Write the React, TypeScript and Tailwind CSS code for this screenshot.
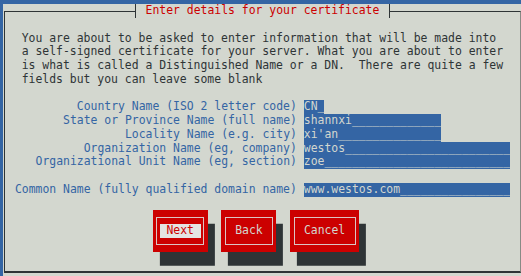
import React from "react";

const fields: [string, string, number][] = [
  ["Country Name (ISO 2 letter code)", "CN", 3],
  ["State or Province Name (full name)", "shannxi", 20],
  ["Locality Name (e.g. city)", "xi'an", 20],
  ["Organization Name (eg, company)", "westos", 30],
  ["Organizational Unit Name (eg, section)", "zoe", 30],
];

function FieldRow({ label, value, width }: { label: string; value: string; width: number }) {
  return (
    <div className="flex h-[13.75px]">
      <div className="w-[291.9px] flex-none text-right whitespace-pre text-[#3465a4]">{label}</div>
      <div className="ml-[1ch] whitespace-pre bg-[#3465a4] text-[#d3d7cf]">{value.padEnd(width, "_")}</div>
    </div>
  );
}

function Button({ label, focused, wide }: { label: string; focused?: boolean; wide?: boolean }) {
  return (
    <div
      className={
        (wide ? "w-[10ch] " : "w-[8ch] ") +
        "h-[41.25px] flex-none bg-[#cc0000] shadow-[6.88px_13.75px_0_0_#2e3436] px-[3.44px] py-[6.4px]"
      }
    >
      <div className="h-full border border-[#dcc4c4] flex items-center justify-center">
        <span
          className={
            "whitespace-pre h-[13.75px] " +
            (focused ? "bg-[#e4e4e2] text-[#cc0000]" : "text-[#d3d7cf]")
          }
        >
          {" " + label + " "}
        </span>
      </div>
    </div>
  );
}

export default function App() {
  return (
    <div className="w-[521px] h-[276px] overflow-hidden bg-[#d3d7cf] border-t-[4px] border-l-[3px] border-[#3465a4] flex flex-col font-['DejaVu_Sans_Mono',monospace] text-[11.43px] leading-[13.75px] text-[#2e3436]">
      {/* title row */}
      <div className="flex h-[13.75px] flex-none items-start">
        <div className="ml-[1px] w-[131px] flex-none mt-[7px] h-[6.75px] border-t border-l border-[#2e3436]" />
        <div className="h-[13.75px] border-l border-r border-[#2e3436] pl-[9.5px] pr-[9.8px] whitespace-pre text-[#cc0000]">
          Enter details for your certificate
        </div>
        <div className="flex-1 mt-[7px] h-[6.75px] border-t border-[#2e3436] border-r-[1px] border-r-[#888a85]" />
      </div>
      {/* frame body */}
      <div className="ml-[1px] mb-[3px] flex-1 min-h-0 border-l border-[#2e3436] border-b-2 border-b-[#2e3436] border-r border-r-[#888a85]">
        <div className="mt-[13.75px] pl-[16.7px] whitespace-pre">
          <div>You are about to be asked to enter information that will be made into</div>
          <div>a self-signed certificate for your server. What you are about to enter</div>
          <div>is what is called a Distinguished Name or a DN.  There are quite a few</div>
          <div>fields but you can leave some blank</div>
        </div>
        <div className="mt-[13.75px]">
          {fields.map(([l, v, w]) => (
            <FieldRow key={l} label={l} value={v} width={w} />
          ))}
        </div>
        <div className="mt-[13.75px]">
          <FieldRow label="Common Name (fully qualified domain name)" value="www.westos.com" width={30} />
        </div>
        <div className="mt-[13.75px] pl-[147.7px] flex gap-[2ch]">
          <Button label="Next" focused />
          <Button label="Back" />
          <Button label="Cancel" wide />
        </div>
      </div>
    </div>
  );
}
